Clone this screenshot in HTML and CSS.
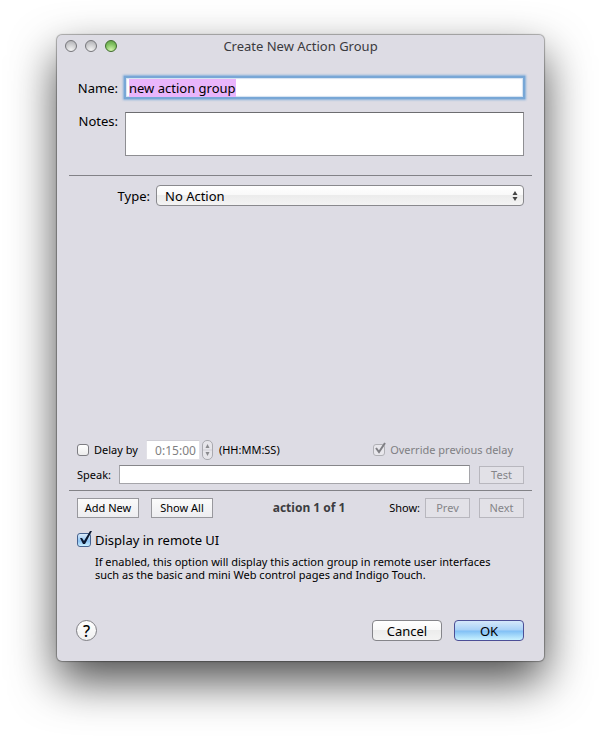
FILE: index.html
```html
<!DOCTYPE html>
<html lang="en">
<head>
    <meta charset="UTF-8">
    <meta name="viewport" content="width=device-width, initial-scale=1.0">
    <title>Create New Action Group</title>
    <link rel="stylesheet" href="styles.css">
</head>
<body>
    <form class="window" id="action-form">
        <header class="title-bar">
            <div class="lights">
                <span class="light"></span>
                <span class="light"></span>
                <span class="light light-green"></span>
            </div>
            <h1 class="title">Create New Action Group</h1>
        </header>

        <section class="fields">
            <label for="name">Name:</label>
            <input class="name-input" type="text" id="name" value="new action group">
            <label class="notes-label" for="notes">Notes:</label>
            <textarea class="notes-input" id="notes"></textarea>
        </section>

        <hr class="divider">

        <section class="type-row">
            <label for="type">Type:</label>
            <div class="select-wrap">
                <select class="type-select" id="type">
                    <option>No Action</option>
                </select>
                <svg class="select-arrows" viewBox="0 0 6 12" width="6" height="12">
                    <path d="M3 1L5.500 5H.5zM3 11L.5 7H5.500z" fill="#444"/>
                </svg>
            </div>
        </section>

        <section class="delay-row small">
            <input class="check check-small" type="checkbox" id="delay">
            <label class="delay-label" for="delay">Delay by</label>
            <input class="delay-input" type="text" value="0:15:00" aria-label="Delay" disabled>
            <button class="stepper" type="button" aria-label="Change delay" disabled>
                <svg viewBox="0 0 9 18" width="9" height="18">
                    <path d="M4.500 3L6.500 7H2.500zM4.500 15L6.500 11H2.500z" fill="#8a8a8e"/>
                    <path d="M0 9H9" stroke="#d0cfd6"/>
                </svg>
            </button>
            <span>(HH:MM:SS)</span>
            <label class="override">
                <span class="check-wrap">
                    <input class="check check-small" type="checkbox" checked disabled>
                    <svg class="tick" viewBox="0 0 16 16" width="16" height="16">
                        <path d="M3 8L6 12L12 3" fill="none" stroke="#7f7f84" stroke-width="2"/>
                    </svg>
                </span>
                Override previous delay
            </label>
        </section>

        <section class="speak-row small">
            <label for="speak">Speak:</label>
            <input class="speak-input" type="text" id="speak">
            <button class="square-button square-short" type="button" disabled>Test</button>
        </section>

        <hr class="divider">

        <section class="nav-row small">
            <button class="square-button square-wide" type="button">Add New</button>
            <button class="square-button square-wide" type="button">Show All</button>
            <strong class="counter">action 1 of 1</strong>
            <span>Show:</span>
            <button class="square-button" type="button" disabled>Prev</button>
            <button class="square-button" type="button" disabled>Next</button>
        </section>

        <section class="remote">
            <label class="remote-label">
                <span class="check-wrap">
                    <input class="check check-blue" type="checkbox" checked>
                    <svg class="tick" viewBox="0 0 16 16" width="16" height="16">
                        <path d="M3 7L5 7L7 10L13 0L15 0L8 13L6 13z" fill="#0b1830"/>
                    </svg>
                </span>
                Display in remote UI
            </label>
            <p class="hint">If enabled, this option will display this action group in remote user interfaces such as the basic and mini Web control pages and Indigo Touch.</p>
        </section>

        <footer class="footer">
            <button class="help-button" type="button" aria-label="Help">?</button>
            <button class="push-button" type="button">Cancel</button>
            <button class="push-button push-default" type="submit">OK</button>
        </footer>
    </form>

    <script>
        const nameInput = document.getElementById('name');

        nameInput.focus();
        nameInput.select();

        document.getElementById('action-form').addEventListener('submit', function(event) {
            event.preventDefault();
        });
    </script>
</body>
</html>
```
FILE: styles.css
```css
* {
    box-sizing: border-box;
}
body {
    margin: 0;
    padding: 35px 57px 79px;
    background-color: #fff;
    color: #000;
    font-family: "Noto Sans", "Open Sans", sans-serif;
    font-size: 13px;
    line-height: 18px;
}
input, textarea, select, button {
    margin: 0;
    padding: 0;
    color: #000;
    font-family: inherit;
    font-size: inherit;
    line-height: inherit;
}
.window {
    display: flex;
    flex-direction: column;
    padding-bottom: 20px;
    border-radius: 5px;
    background-color: #dddce4;
    box-shadow: 0 0 1px 1px rgba(0, 0, 0, 0.3), 0 20px 46px rgba(0, 0, 0, 0.7);
}
.small {
    font-size: 11px;
}
.title-bar {
    display: grid;
    grid-template-columns: 60px 1fr 60px;
    align-items: center;
    height: 22px;
    padding: 0 8px;
}
.lights {
    display: flex;
    gap: 8px;
}
.light {
    width: 12px;
    height: 12px;
    border: 1px solid #77777c;
    border-radius: 50%;
    background: radial-gradient(circle at 50% 90%, #f4f4f4, #c9c9cc 60%, #aaaaae);
}
.light-green {
    border-color: #3f6b2c;
    background: radial-gradient(circle at 50% 90%, #d3f5ae, #7fc05f 60%, #5c9a45);
}
.title {
    margin: 0;
    color: #3a3a3e;
    font-size: 13px;
    font-weight: normal;
    line-height: 18px;
    text-align: center;
}
.fields {
    display: grid;
    grid-template-columns: 41px 1fr;
    gap: 14px 7px;
    align-items: center;
    padding: 20px 20px 19px;
}
.fields label {
    justify-self: end;
}
.fields .notes-label {
    align-self: start;
}
.name-input {
    width: 100%;
    height: 21px;
    padding: 1px 3px 0;
    border: 1px solid #78a7d6;
    outline: none;
    box-shadow: inset 0 0 1px 1px #d3e2f1, 0 0 1px 1px #78a7d6, 0 0 2px 2px #8db4dc;
}
.name-input::selection {
    background-color: #e9b5fb;
    color: #000;
}
.notes-input {
    display: block;
    width: 100%;
    height: 44px;
    padding: 2px 4px;
    border: 1px solid #8e8e92;
    border-top-color: #6d6d70;
    resize: none;
}
.divider {
    width: calc(100% - 24px);
    height: 1px;
    margin: 0 12px;
    border: none;
    background-color: #828287;
}
.type-row {
    display: grid;
    grid-template-columns: 73px 1fr;
    align-items: center;
    gap: 6px;
    padding: 9px 20px 0;
}
.type-row label {
    justify-self: end;
}
.select-wrap {
    position: relative;
}
.type-select {
    display: block;
    width: 100%;
    height: 21px;
    padding: 0 20px 0 8px;
    border: 1px solid #89898d;
    border-radius: 4px;
    background: linear-gradient(#fff 0%, #f9f9f9 45%, #ececec 50%, #f3f3f3 100%);
    appearance: none;
}
.select-arrows {
    position: absolute;
    top: 5px;
    right: 6px;
    pointer-events: none;
}
.delay-row {
    display: flex;
    align-items: center;
    margin-top: 234px;
    padding: 0 31px 0 20px;
}
.check-wrap {
    position: relative;
    display: flex;
}
.check {
    width: 14px;
    height: 14px;
    border: 1px solid #7d7d82;
    border-radius: 3px;
    background: linear-gradient(#fff, #ececec);
    appearance: none;
}
.check-small {
    width: 12px;
    height: 12px;
}
.check:disabled {
    border-color: #b0b0b5;
    background: #e8e7ec;
}
.check-blue {
    border-color: #46628f;
    background: linear-gradient(#dcecfb, #8dc3f3 60%, #c9f0ff);
}
.tick {
    position: absolute;
    left: 0;
    bottom: 0;
    pointer-events: none;
}
.delay-label {
    margin: 0 8px 0 5px;
}
.delay-input {
    width: 54px;
    height: 20px;
    padding: 0 3px;
    border: 1px solid #e2e1e7;
    border-top-color: #cfced5;
    background-color: #fff;
    color: #7f7f82;
    font-size: 12px;
    text-align: right;
}
.stepper {
    display: flex;
    margin: 0 6px 0 2px;
    border: 1px solid #a9a9af;
    border-radius: 5px;
    background-color: #e6e5ea;
}
.override {
    display: flex;
    align-items: center;
    gap: 5px;
    margin-left: auto;
    color: #7f7f83;
}
.speak-row {
    display: flex;
    align-items: center;
    gap: 8px;
    padding: 5px 20px 6px;
}
.speak-input {
    flex: 1;
    min-width: 0;
    height: 19px;
    margin-right: 1px;
    padding: 0 4px;
    border: 1px solid #a5a5aa;
    border-top-color: #86868a;
}
.square-button {
    width: 45px;
    height: 20px;
    border: 1px solid #98989d;
    background: linear-gradient(#fbfbfb, #ededf0);
    line-height: 16px;
}
.square-short {
    height: 18px;
}
.square-wide {
    width: 62px;
}
.square-button:disabled {
    border-color: #b8b7be;
    background: #e2e1e7;
    color: #858589;
}
.nav-row {
    display: flex;
    align-items: center;
    padding: 7px 20px 0;
}
.nav-row .square-button + .square-button {
    margin-left: 9px;
}
.nav-row .square-wide + .square-wide {
    margin-left: 12px;
}
.nav-row span {
    margin-right: 5px;
}
.counter {
    flex: 1;
    padding-left: 16px;
    color: #3c3c40;
    font-size: 12px;
    text-align: center;
}
.remote {
    padding: 13px 20px 0;
}
.remote-label {
    display: flex;
    align-items: center;
    gap: 4px;
}
.hint {
    margin: 6px 0 0;
    padding: 0 14px 0 18px;
    font-size: 11px;
    line-height: 13px;
}
.footer {
    display: flex;
    align-items: center;
    gap: 12px;
    margin-top: 39px;
    padding: 0 20px 0 19px;
}
.help-button {
    width: 21px;
    height: 21px;
    margin-right: auto;
    border: 1px solid #808085;
    border-radius: 50%;
    background: linear-gradient(#fff, #f0f0f0);
    font-size: 16px;
    font-weight: 500;
    line-height: 18px;
}
.push-button {
    width: 70px;
    height: 21px;
    border: 1px solid #85858a;
    border-radius: 4px;
    background: linear-gradient(#fff 0%, #f9f9f9 45%, #ececec 50%, #f3f3f3 100%);
    line-height: 16px;
}
.push-default {
    border-color: #4c4f96;
    background: linear-gradient(#d5e8fa 0%, #a8d1f7 48%, #80bff5 52%, #c8f2ff 100%);
}
```
